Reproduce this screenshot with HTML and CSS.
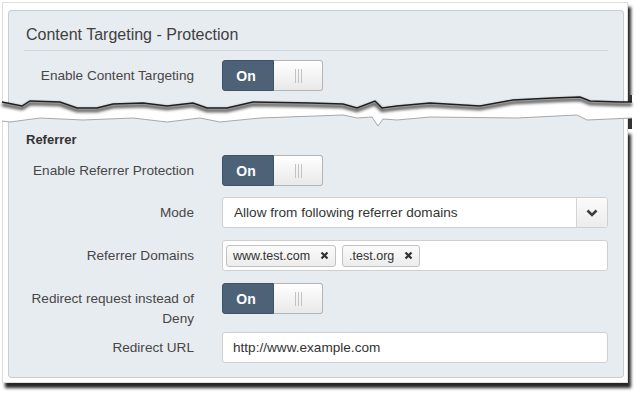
FILE: index.html
```html
<!DOCTYPE html>
<html lang="en">
<head>
  <meta charset="UTF-8">
  <meta name="viewport" content="width=device-width, initial-scale=1.0">
  <title>Content Targeting - Protection</title>
  <link rel="stylesheet" href="styles.css">
</head>
<body>

<div class="sheet sheet-top">
  <div class="panel panel-top">
    <h2 class="panel-title">Content Targeting - Protection</h2>
    <div class="row row-first">
      <label class="row-label">Enable Content Targeting</label>
      <div class="toggle">
        <span class="toggle-on">On</span>
        <span class="toggle-off"><i></i><i></i><i></i></span>
      </div>
    </div>
  </div>
</div>

<!-- torn paper edge between the two parts of the screenshot -->
<svg class="tear" width="640" height="34" viewBox="0 0 640 34">
  <defs>
    <clipPath id="tearTop">
      <polygon points="0,0 640,0 640,7 632,7 620,7 590,6 580,2 553,3 513,5 480,11 430,8 397,11 382,13 375,6 357,13 343,9 310,8 253,7 227,13 207,13 193,8 167,11 143,8 113,9 97,13 77,13 60,7 30,6 22,11 12,9 2,7 0,7"/>
    </clipPath>
    <clipPath id="tearBottom">
      <polygon points="0,26 2,26 10,27 40,23 83,25 133,23 167,27 200,23 220,27 260,23 343,20 357,23 372,22 378,31 383,24 397,25 430,22 517,23 577,20 587,25 632,23 640,23 640,34 0,34"/>
    </clipPath>
    <filter id="soft" x="-5%" y="-100%" width="110%" height="300%">
      <feGaussianBlur stdDeviation="1.4"/>
    </filter>
  </defs>
  <rect width="640" height="34" fill="#fff"/>
  <g clip-path="url(#tearTop)">
    <rect x="2" y="0" width="626" height="34" fill="#fff"/>
    <rect x="8" y="0" width="616" height="34" fill="#e7ecf1"/>
    <path d="M2.5 0V34M627.5 0V34" stroke="#dedede"/>
    <path d="M8.5 0V34M623.5 0V34" stroke="#c9ced3"/>
    <rect x="628" y="0" width="4" height="34" fill="#333"/>
  </g>
  <polyline points="2,7 12,9 22,11 30,6 60,7 77,13 97,13 113,9 143,8 167,11 193,8 207,13 227,13 253,7 310,8 343,9 357,13 375,6 382,13 397,11 430,8 480,11 513,5 553,3 580,2 590,6 620,7 632,7" fill="none" stroke="#000" stroke-width="3.5" opacity=".65" filter="url(#soft)" transform="translate(0 2.5)"/>
  <polyline points="2,7 12,9 22,11 30,6 60,7 77,13 97,13 113,9 143,8 167,11 193,8 207,13 227,13 253,7 310,8 343,9 357,13 375,6 382,13 397,11 430,8 480,11 513,5 553,3 580,2 590,6 620,7 632,7" fill="none" stroke="#1e1e1e" stroke-width="1.4"/>
  <g clip-path="url(#tearBottom)">
    <rect x="2" y="0" width="626" height="34" fill="#fff"/>
    <rect x="8" y="0" width="616" height="34" fill="#e7ecf1"/>
    <path d="M2.5 0V34M627.5 0V34" stroke="#dedede"/>
    <path d="M8.5 0V34M623.5 0V34" stroke="#c9ced3"/>
    <rect x="628" y="0" width="4" height="34" fill="#333"/>
  </g>
  <polyline points="2,26 10,27 40,23 83,25 133,23 167,27 200,23 220,27 260,23 343,20 357,23 372,22 378,31 383,24 397,25 430,22 517,23 577,20 587,25 632,23" fill="none" stroke="#a8a8a8" stroke-width="1"/>
</svg>

<div class="sheet sheet-bottom">
  <div class="panel panel-bottom">
    <h3 class="section-title">Referrer</h3>

    <div class="row">
      <label class="row-label">Enable Referrer Protection</label>
      <div class="toggle">
        <span class="toggle-on">On</span>
        <span class="toggle-off"><i></i><i></i><i></i></span>
      </div>
    </div>

    <div class="row row-mode">
      <label class="row-label">Mode</label>
      <div class="select">
        <span class="select-value">Allow from following referrer domains</span>
        <span class="select-btn">
          <svg width="12" height="8" viewBox="0 0 12 8"><path d="M1.5 1.5 6 6 10.5 1.5" fill="none" stroke="#3d3d3d" stroke-width="2.6"/></svg>
        </span>
      </div>
    </div>

    <div class="row">
      <label class="row-label">Referrer Domains</label>
      <div class="tags">
        <span class="tag">www.test.com
          <svg width="9" height="9" viewBox="0 0 9 9"><path d="M1.5 1.5 7.5 7.5M7.5 1.5 1.5 7.5" stroke="#333" stroke-width="2.2"/></svg>
        </span>
        <span class="tag">.test.org
          <svg width="9" height="9" viewBox="0 0 9 9"><path d="M1.5 1.5 7.5 7.5M7.5 1.5 1.5 7.5" stroke="#333" stroke-width="2.2"/></svg>
        </span>
      </div>
    </div>

    <div class="row row-tall">
      <label class="row-label">Redirect request instead of Deny</label>
      <div class="toggle">
        <span class="toggle-on">On</span>
        <span class="toggle-off"><i></i><i></i><i></i></span>
      </div>
    </div>

    <div class="row row-url">
      <label class="row-label">Redirect URL</label>
      <div class="field">http://www.example.com</div>
    </div>
  </div>
</div>

</body>
</html>
```

FILE: styles.css
```css
body {
  margin: 0;
  width: 640px;
  height: 396px;
  background: #fff;
  font-family: "Liberation Sans", Arial, sans-serif;
  color: #444;
}

.sheet {
  width: 626px;
  box-sizing: border-box;
  margin-left: 2px;
  background: #fff;
  border: 1px solid #dedede;
  box-shadow: 3px 5px 3px rgba(0, 0, 0, 0.85);
}

.sheet-top {
  margin-top: 2px;
  border-bottom: none;
  padding: 7px 3px 0 5px;
}

.sheet-bottom {
  border-top: none;
  padding: 0 3px 4px 5px;
}

.tear {
  display: block;
}

.panel {
  background: #e7ecf1;
  border: 1px solid #c9ced3;
  padding: 0 15px;
}

.panel-top {
  border-bottom: none;
  border-radius: 4px 4px 0 0;
  padding-top: 14px;
  padding-bottom: 4px;
}

.panel-bottom {
  border-top: none;
  border-radius: 0 0 4px 4px;
  padding-top: 2px;
  padding-bottom: 14px;
}

.panel-title {
  margin: 0;
  padding: 0 2px 5px;
  font-size: 16px;
  font-weight: normal;
  line-height: 20px;
  color: #3f3f3f;
  border-bottom: 1px solid #d2d7dc;
}

.section-title {
  margin: 0 0 6px;
  padding-left: 2px;
  font-size: 13px;
  line-height: 18px;
  color: #333;
}

.row {
  display: flex;
  align-items: center;
  margin-top: 12px;
}

.row-first {
  margin-top: 9px;
}

.section-title + .row {
  margin-top: 0;
}

.row-mode {
  margin-top: 11px;
}

.row-url {
  margin-top: 3px;
}

.row-tall {
  align-items: flex-start;
}

.row-tall .row-label {
  padding-top: 6px;
}

.row-label {
  flex-shrink: 0;
  width: 170px;
  margin-right: 28px;
  text-align: right;
  font-size: 13.6px;
  line-height: 20px;
  color: #474747;
}

.toggle {
  display: flex;
  width: 101px;
  height: 31px;
}

.toggle-on {
  display: flex;
  align-items: center;
  justify-content: center;
  width: 52px;
  box-sizing: border-box;
  padding-right: 4px;
  background: #4d6276;
  border: 1px solid #3f5366;
  border-radius: 3px 0 0 3px;
  color: #fff;
  font-size: 14px;
  font-weight: bold;
}

.toggle-off {
  display: flex;
  flex: 1;
  align-items: center;
  justify-content: center;
  gap: 2px;
  background: linear-gradient(#fff, #e9e9e9);
  border: 1px solid #b4b4b4;
  border-left: none;
  border-radius: 0 3px 3px 0;
}

.toggle-off i {
  width: 1px;
  height: 14px;
  background: #c2c2c2;
}

.select {
  display: flex;
  flex: 1;
  height: 31px;
  box-sizing: border-box;
  background: #fff;
  border: 1px solid #cfcfcf;
  border-radius: 3px;
}

.select-value {
  flex: 1;
  padding-left: 11px;
  font-size: 13.6px;
  line-height: 29px;
  color: #333;
}

.select-btn {
  display: flex;
  align-items: center;
  justify-content: center;
  width: 30px;
  background: linear-gradient(#fbfbfb, #ececec);
  border-left: 1px solid #d4d4d4;
  border-radius: 0 3px 3px 0;
}

.tags {
  display: flex;
  flex: 1;
  align-items: center;
  gap: 6px;
  height: 31px;
  box-sizing: border-box;
  padding: 0 3px;
  background: #fff;
  border: 1px solid #cfcfcf;
  border-radius: 3px;
}

.tag {
  display: flex;
  align-items: center;
  height: 22px;
  box-sizing: border-box;
  padding: 0 6px 0 6px;
  background: linear-gradient(#fbfbfb, #ececec);
  border: 1px solid #c2c2c2;
  border-radius: 3px;
  font-size: 12.5px;
  color: #333;
}

.tag svg {
  margin-left: 10px;
}

.field {
  flex: 1;
  height: 31px;
  box-sizing: border-box;
  padding-left: 10px;
  background: #fff;
  border: 1px solid #cfcfcf;
  border-radius: 3px;
  font-size: 13.6px;
  line-height: 29px;
  color: #333;
}
```
